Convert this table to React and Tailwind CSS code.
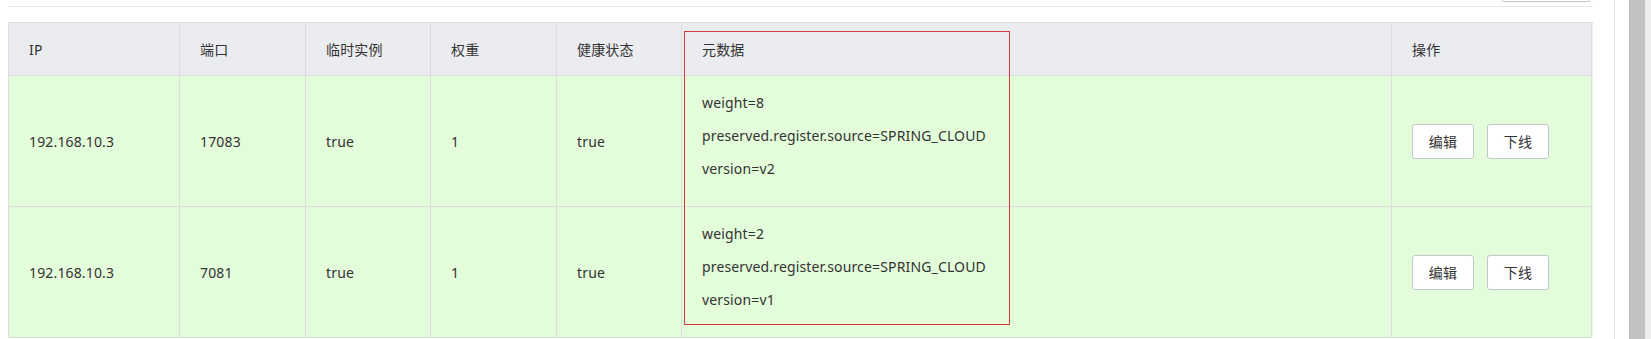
import React from 'react';

const COLS = 'grid grid-cols-[171px_126px_125px_126px_125px_710px_200px]';

const HEADERS = ['IP', '端口', '临时实例', '权重', '健康状态', '元数据', '操作'];

const ROWS = [
  {
    ip: '192.168.10.3',
    port: '17083',
    ephemeral: 'true',
    weight: '1',
    healthy: 'true',
    metadata: ['weight=8', 'preserved.register.source=SPRING_CLOUD', 'version=v2'],
  },
  {
    ip: '192.168.10.3',
    port: '7081',
    ephemeral: 'true',
    weight: '1',
    healthy: 'true',
    metadata: ['weight=2', 'preserved.register.source=SPRING_CLOUD', 'version=v1'],
  },
];

function Cell({ children }) {
  return (
    <div className="h-[131px] flex items-center pl-5 border-r border-b border-[#dcdedb]">
      {children}
    </div>
  );
}

function ActionButton({ label }) {
  return (
    <button className="w-[62px] h-[35px] bg-white border border-[#c4c6cf] rounded-[3px] text-[14px] text-[#333]">
      {label}
    </button>
  );
}

export default function App() {
  return (
    <div className="w-[1651px] h-[339px] bg-white flex overflow-hidden font-['Noto_Sans','Noto_Sans_CJK_SC',sans-serif] text-[14px] tracking-[0.15px] text-[#333]">
      {/* main content */}
      <div className="w-[1614px] pl-2 pr-[21px] shrink-0">
        <div className="h-[6px] flex justify-end pr-[3px]">
          <div className="w-[88px] h-[2px] border-x border-b border-[#c4c6cf] rounded-b-[3px]" />
        </div>
        <div className="border-t border-[#e6e6e6] h-[16px]" />

        <div className="relative border-l border-t border-[#dcdcdc] w-[1585px]">
          {/* header */}
          <div className={`${COLS} bg-[#ebecf0]`}>
            {HEADERS.map((h) => (
              <div key={h} className="h-[53px] flex items-center pl-5 border-r border-b border-[#dcdcdc]">
                {h}
              </div>
            ))}
          </div>

          {/* rows */}
          {ROWS.map((r, i) => (
            <div key={i} className={`${COLS} bg-[#e3fcd9]`}>
              <Cell>{r.ip}</Cell>
              <Cell>{r.port}</Cell>
              <Cell>{r.ephemeral}</Cell>
              <Cell>{r.weight}</Cell>
              <Cell>{r.healthy}</Cell>
              <div className="h-[131px] pl-5 pt-[10px] border-r border-b border-[#dcdedb]">
                {r.metadata.map((m) => (
                  <div key={m} className="h-[33px] leading-[33px]">{m}</div>
                ))}
              </div>
              <div className="h-[131px] flex items-center gap-[13px] pl-5 border-r border-b border-[#dcdedb]">
                <ActionButton label="编辑" />
                <ActionButton label="下线" />
              </div>
            </div>
          ))}

          {/* red annotation box over the metadata column */}
          <div className="absolute left-[675px] top-[8px] w-[326px] h-[294px] border border-[#d9383f] pointer-events-none" />
        </div>
      </div>

      {/* page scrollbar */}
      <div className="flex-1 flex border-l border-[#e2e2e2]">
        <div className="w-[14px] bg-white" />
        <div className="w-[16px] bg-[#c1c1c1]" />
        <div className="flex-1 bg-[#ededed]" />
      </div>
    </div>
  );
}
